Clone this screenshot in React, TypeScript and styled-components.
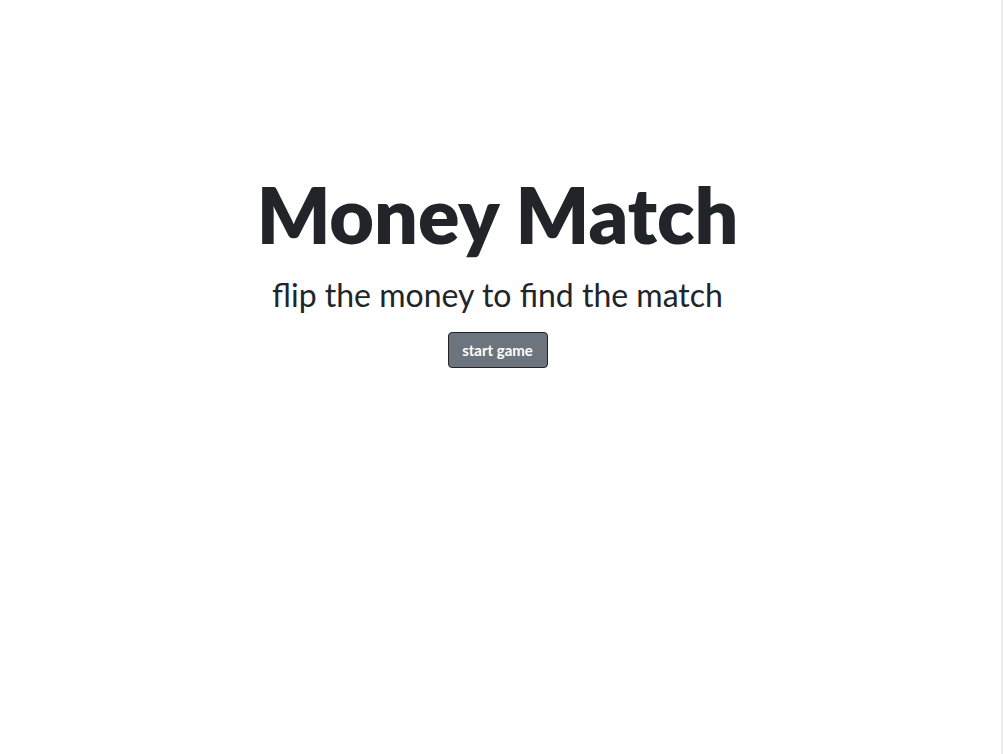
import React from "react";
import styled, { createGlobalStyle } from "styled-components";

const Global = createGlobalStyle`
  html, body { margin: 0; padding: 0; background: #fff; }
  body { font-family: Lato, "Open Sans", sans-serif; color: #212529; }
`;

const Page = styled.div`
  box-sizing: border-box;
  width: 1003px;
  min-height: 754px;
  border-right: 2px solid #ececec;
  display: flex;
  flex-direction: column;
  align-items: center;
  padding: 168px 6px 0 0;
`;

const Title = styled.h1`
  margin: 0;
  font-family: Lato, sans-serif;
  font-weight: 800;
  font-size: 77px;
  line-height: 1.2;
  color: #212529;
`;

const Subtitle = styled.p`
  margin: 16px 0 17px;
  font-family: Lato, sans-serif;
  font-size: 32px;
  font-weight: 400;
  line-height: 1.2;
  color: #212529;
`;

const Button = styled.button`
  box-sizing: border-box;
  width: 100px;
  height: 36px;
  padding: 0;
  background: #6c757d;
  border: 1px solid #212529;
  border-radius: 4px;
  color: #fff;
  font-family: Lato, sans-serif;
  font-weight: 700;
  font-size: 15px;
  cursor: pointer;
`;

export default function App() {
  return (
    <>
      <Global />
      <Page>
        <Title>Money Match</Title>
        <Subtitle>flip the money to find the match</Subtitle>
        <Button>start game</Button>
      </Page>
    </>
  );
}
